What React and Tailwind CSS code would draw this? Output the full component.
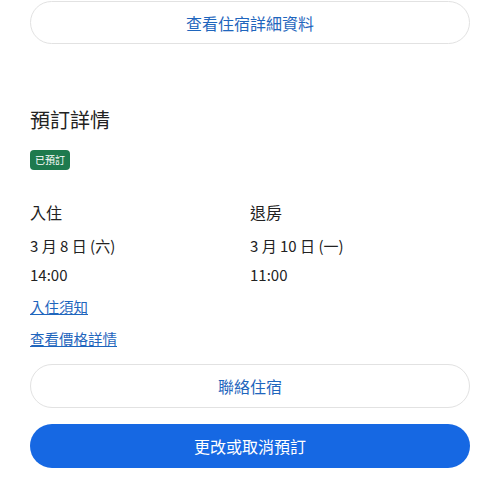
export default function App() {
  const font = { fontFamily: '"Noto Sans CJK TC", "Noto Sans", sans-serif' };
  return (
    <div className="w-[500px] h-[500px] bg-white px-[30px] pt-px text-[#222222] overflow-hidden" style={font}>
      <button className="w-full h-[43px] rounded-full border border-[#e2e2e2] text-[#1f66bd] text-[16px] flex items-center justify-center">
        查看住宿詳細資料
      </button>

      <h2 className="mt-[62px] text-[20px] leading-[28px]">預訂詳情</h2>
      <div className="mt-[16px] flex">
        <span className="bg-[#1e7a4e] text-white text-[10px] leading-[20px] px-[5px] rounded-[4px]">已預訂</span>
      </div>

      <div className="mt-[30px] grid grid-cols-2 text-[15px]">
        <div>
          <div className="text-[16px] leading-[24px]">入住</div>
          <div className="mt-[10px] leading-[24px]">3 月 8 日 (六)</div>
          <div className="mt-[5px] leading-[24px]">14:00</div>
        </div>
        <div>
          <div className="text-[16px] leading-[24px]">退房</div>
          <div className="mt-[10px] leading-[24px]">3 月 10 日 (一)</div>
          <div className="mt-[5px] leading-[24px]">11:00</div>
        </div>
      </div>

      <div className="mt-[8px] flex flex-col items-start gap-[8px] text-[14.5px] text-[#1f66bd]">
        <a href="#" className="underline leading-[24px]">入住須知</a>
        <a href="#" className="underline leading-[24px]">查看價格詳情</a>
      </div>

      <button className="mt-[13px] w-full h-[44px] rounded-full border border-[#e2e2e2] text-[#1f66bd] text-[16px] flex items-center justify-center">
        聯絡住宿
      </button>
      <button className="mt-[16px] w-full h-[44px] rounded-full bg-[#1668e3] text-white text-[16px] flex items-center justify-center">
        更改或取消預訂
      </button>
    </div>
  );
}
